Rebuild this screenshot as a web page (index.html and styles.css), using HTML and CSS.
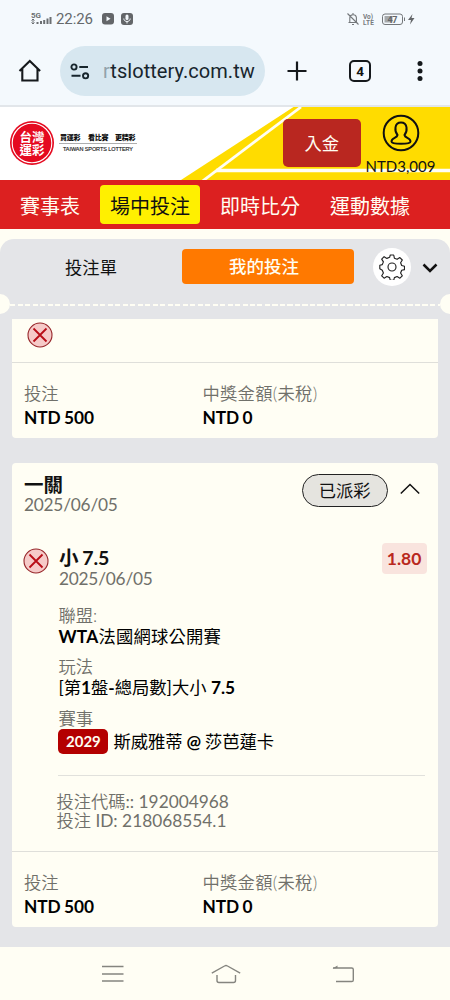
FILE: index.html
```html
<!DOCTYPE html>
<html lang="zh-Hant">
<head>
<meta charset="utf-8">
<title>台灣運彩</title>
<link rel="stylesheet" href="styles.css">
</head>
<body>
<div class="screen">
  <div class="status">
    <svg class="signal" width="21" height="15" viewBox="0 0 21 15"><text x="0" y="7" class="g5" textLength="10">5G</text><path d="M2 8v5M.5 9.500L2 8l1.500 1.500M.5 11.500L2 13l1.500-1.500" class="thin"/><path d="M6.500 13v-2M10 13v-3M13.200 13V9M16.500 13V7.500M19.500 13V6" class="bars"/></svg>
    <span class="clock">22:26</span>
    <svg class="play" width="12" height="12" viewBox="0 0 12 12"><rect width="12" height="11.500" rx="3" fill="#636669"/><path d="M4.500 3.300v5L8.500 5.800z" fill="#f4f9fd"/></svg>
    <svg class="mic" width="12" height="12" viewBox="0 0 12 12"><rect width="12" height="12" rx="3" fill="#636669"/><rect x="4.500" y="1.500" width="3" height="5.500" rx="1.500" fill="#f4f9fd"/><path d="M2.800 5.500c0 4 6.400 4 6.400 0M6 8.500v2" fill="none" stroke="#f4f9fd"/></svg>
    <span class="grow"></span>
    <svg width="70" height="16" viewBox="0 0 70 16"><g fill="none" stroke="#73777a"><path d="M2.500 11.500h9M3.800 11.500V7c0-4 6-4.500 6.600-.5v5M7 3.500V2M6 13.500h2M1.500 2.500l11 11" stroke-width="1.100"/><rect x="36.500" y="3" width="20" height="10.500" rx="2.500"/><path d="M58.500 6.500v3.500"/></g><rect x="38.500" y="5" width="8" height="6.500" fill="#a5a9ac"/><text x="17" y="7.500" class="volte" textLength="10">Vo)</text><text x="17" y="14" class="volte" textLength="11">LTE</text><text x="41.500" y="11.500" class="batt" textLength="10">47</text><path d="M66.500 3L62 9h3l-1 4.500L68.500 7h-3z" fill="#636669"/></svg>
  </div>

  <div class="toolbar">
    <svg class="home" width="24" height="24" viewBox="0 0 24 24"><path d="M1.500 12L11.800 2l10.300 10M4.300 10v11.500h15.200V10" fill="none" stroke="#15191c" stroke-width="2.100"/></svg>
    <div class="url">
      <svg width="20" height="17" viewBox="0 0 20 17"><g fill="none" stroke="#17252d" stroke-width="1.900"><circle cx="4" cy="4" r="2.600"/><circle cx="15.600" cy="12.800" r="2.600"/><path d="M9.300 4H18M1.500 12.800h9"/></g></svg>
      <span class="host"><span class="fade">r</span>tslottery.com.tw</span>
    </div>
    <svg class="plus" width="20" height="20" viewBox="0 0 20 20"><path d="M10 .5v19M.5 10h19" stroke="#15191c" stroke-width="2.200"/></svg>
    <span class="tabs">4</span>
    <svg class="dots" width="8" height="20" viewBox="0 0 8 20"><circle cx="4" cy="2.500" r="2.500"/><circle cx="4" cy="10" r="2.500"/><circle cx="4" cy="17.500" r="2.500"/></svg>
  </div>

  <header class="brand">
    <svg class="stripes" width="450" height="73" viewBox="0 0 450 73"><path d="M181 73L293.500 0H450v73z" fill="#ffdc00"/><path d="M202 74.500L301 0" fill="none" stroke="#fffef4" stroke-width="2.800"/><path d="M216 63.500H450" stroke="#fffef4" stroke-width="3.600"/></svg>
    <svg class="logo" width="130" height="46" viewBox="0 0 130 46"><circle cx="22" cy="22" r="22" fill="#e50a20"/><circle cx="22" cy="22" r="19.800" fill="none" stroke="#fff" stroke-width="1.100"/><text x="9.500" y="20.500" class="seal" textLength="25">台灣</text><text x="9.500" y="34" class="seal" textLength="25">運彩</text><text x="50" y="18.500" class="slogan" textLength="20.500">買運彩</text><text x="78" y="18.500" class="slogan" textLength="20.500">看比賽</text><text x="105" y="18.500" class="slogan" textLength="20.500">更精彩</text><path d="M49 22.500h78" stroke="#999" stroke-width=".8"/><text x="53" y="29.500" class="eng" textLength="70">TAIWAN SPORTS LOTTERY</text></svg>
    <div class="deposit">入金</div>
    <div class="account">
      <svg width="38" height="38" viewBox="0 0 38 38"><g fill="none" stroke="#111" stroke-width="2"><circle cx="19" cy="19" r="17.300"/><path d="M15.500 21C12.500 17.500 12 8.500 19 8.500s6.500 9 3.500 12.500c.5 3.200 6 2.500 6 6.500 0 3-19 3-19 0 0-4 5.500-3.300 6-6.500z"/></g></svg>
      <span>NTD3,009</span>
    </div>
  </header>

  <nav class="menu"><span>賽事表</span><span class="on">場中投注</span><span>即時比分</span><span>運動數據</span></nav>

  <main class="panel">
    <div class="switch">
      <span class="slip">投注單</span>
      <span class="mine">我的投注</span>
      <span class="gear"><svg width="26" height="26" viewBox="0 0 26 26"><g fill="none" stroke="#222" stroke-width="1.150" stroke-linejoin="round"><circle cx="13" cy="13" r="4"/><path d="M11.300 1h3.400l.7 3.200 2.700 1.100 2.800-1.700 2.400 2.400-1.700 2.800 1.100 2.700 2.800.7v3.400l-2.800.7-1.100 2.700 1.700 2.800-2.400 2.400-2.800-1.700-2.700 1.100-.7 2.800h-3.400l-.7-2.800-2.700-1.100-2.800 1.700-2.400-2.400 1.700-2.800-1.100-2.700L.8 14.700v-3.400l2.500-.7 1.100-2.700-1.700-2.800 2.400-2.400 2.800 1.700 2.700-1.100z"/></g></svg></span>
      <svg class="down" width="16" height="10" viewBox="0 0 16 10"><path d="M1.500 1.500L8 8l6.500-6.500" fill="none" stroke="#111" stroke-width="2.500"/></svg>
    </div>
    <div class="tear"><i></i><b></b><i></i></div>

    <section class="card first">
      <div class="rest"><svg class="lost" width="26" height="26" viewBox="0 0 26 26"><circle cx="13" cy="13" r="12" fill="#f6cac8" stroke="#97272b" stroke-width="1.100"/><path d="M6.500 6.500l13 13M19.500 6.500l-13 13" stroke="#b80d16" stroke-width="1.800"/></svg></div>
      <div class="totals"><div><p class="label">投注</p><p class="value">NTD 500</p></div><div><p class="label wide">中獎金額(未稅)</p><p class="value">NTD 0</p></div></div>
    </section>

    <section class="card">
      <div class="detail">
        <div class="head">
          <div class="title"><h2>一關</h2><p class="date">2025/06/05</p></div>
          <span class="paid">已派彩</span>
          <svg class="up" width="20" height="12" viewBox="0 0 20 12"><path d="M.8 10.500L10 1.500l9.200 9" fill="none" stroke="#111" stroke-width="1.500"/></svg>
        </div>
        <div class="bet">
          <svg class="lost" width="26" height="26" viewBox="0 0 26 26"><circle cx="13" cy="13" r="12" fill="#f6cac8" stroke="#97272b" stroke-width="1.100"/><path d="M6.500 6.500l13 13M19.500 6.500l-13 13" stroke="#b80d16" stroke-width="1.800"/></svg>
          <div class="pick"><h3>小 7.5</h3><p class="date">2025/06/05</p></div>
          <span class="odds">1.80</span>
        </div>
        <dl class="facts">
          <dt>聯盟:</dt><dd class="league"><b>WTA</b>法國網球公開賽</dd>
          <dt>玩法</dt><dd>[第<b>1</b>盤<b>-</b>總局數]大小 <b>7.5</b></dd>
          <dt>賽事</dt><dd class="match"><span class="no">2029</span>斯威雅蒂 <b class="at">@</b> 莎芭蓮卡</dd>
        </dl>
        <div class="codes"><p>投注代碼<span>:: 192004968</span></p><p>投注<span> ID: 218068554.1</span></p></div>
      </div>
      <div class="totals"><div><p class="label">投注</p><p class="value">NTD 500</p></div><div><p class="label wide">中獎金額(未稅)</p><p class="value">NTD 0</p></div></div>
    </section>
  </main>

  <div class="system">
    <svg width="22" height="18" viewBox="0 0 22 18"><path d="M0 1.500h21.500M0 9h21.500M0 16h21.500"/></svg>
    <svg width="30" height="20" viewBox="0 0 30 20"><path d="M.8 9.200L13.500 2q1.500-1 3 0l12.700 7.200M6 11v5.500q0 2 2 2h14.500q2 0 2-2V11"/></svg>
    <svg width="23" height="18" viewBox="0 0 23 18"><path d="M1 3h18.700q1.600 0 1.600 1.600v10.300q0 1.600-1.600 1.600H4"/><path d="M.5 3.500L5.500.5v2.500z" fill="#85857f" stroke="none"/></svg>
  </div>
</div>
</body>
</html>
```

FILE: styles.css
```css
* { box-sizing: border-box; margin: 0; padding: 0; }
body { font-family: Lato, "Noto Sans CJK TC", sans-serif; font-size: 17.3px; color: #111; background: #fffef4; }
svg { display: block; flex: none; }
.screen { width: 450px; height: 1000px; overflow: hidden; display: flex; flex-direction: column; background: #fffef4; }
.status { height: 37px; background: #f4f9fd; display: flex; align-items: center; padding: 0 34px 0 31px; }
.signal { margin-right: 4px; }
.g5 { font: bold 8px Roboto, sans-serif; fill: #6b6f72; }
.thin { fill: none; stroke: #6b6f72; stroke-width: 1; }
.bars { stroke: #6b6f72; stroke-width: 2; }
.clock { font: 15px/20px Roboto, sans-serif; color: #65696c; width: 37px; letter-spacing: -.1px; }
.play { margin-left: 9px; }
.mic { margin-left: 7px; }
.grow { flex: 1; }
.volte { font: bold 6.500px Roboto, sans-serif; fill: #777b7e; }
.batt { font: bold 9px Roboto, sans-serif; fill: #636669; }
.toolbar { height: 70px; background: #f4f9fd; border-bottom: 2px solid #e2e6ea; display: flex; align-items: center; padding: 0 0 0 18px; }
.url { width: 205px; height: 50px; margin-left: 18px; border-radius: 25px; background: #d7e7f0; display: flex; align-items: center; padding-left: 10px; }
.host { margin-left: 13px; font: 20px Roboto, sans-serif; color: #17252d; letter-spacing: .05px; white-space: nowrap; }
.fade { color: #92a2ab; }
.plus { margin-left: 22px; }
.tabs { width: 22px; height: 22px; margin-left: 42px; border: 2.500px solid #15191c; border-radius: 5px; font: bold 13.500px/18px Roboto, sans-serif; text-align: center; }
.dots { margin-left: 45px; fill: #15191c; }
.brand { position: relative; height: 73px; background: #fff; display: flex; padding-left: 10px; flex: none; }
.stripes { position: absolute; left: 0; top: 0; }
.logo { position: relative; margin-top: 14px; }
.seal { font: bold 12.500px "Noto Sans CJK TC", sans-serif; fill: #fff; }
.slogan { font: 900 7px "Noto Sans CJK TC", sans-serif; fill: #111; }
.eng { font: 5.500px "Liberation Sans", sans-serif; fill: #222; stroke: #222; stroke-width: .15; }
.deposit { position: relative; margin: 12px 0 0 143px; width: 77.500px; height: 48px; border-radius: 5px; background: #b92720; color: #fffdf2; line-height: 49px; text-align: center; }
.account { position: relative; width: 80px; margin-top: 7px; display: flex; flex-direction: column; align-items: center; }
.account span { font-size: 15px; line-height: 20px; margin-top: 4px; }
.menu { height: 49px; flex: none; background: #dc2020; color: #fffdf2; font-size: 20px; display: flex; align-items: center; padding: 0 0 0 10px; gap: 10px; }
.menu span { height: 39px; line-height: 42px; padding: 0 10px; border-radius: 4px; }
.menu .on { background: #fff000; color: #111; }
.panel { height: 708px; margin-top: 10px; flex: none; border-radius: 14px 14px 0 0; background: #e4e5e8; overflow: hidden; display: flex; flex-direction: column; }
.switch { height: 56px; display: flex; align-items: center; }
.slip { width: 182px; text-align: center; margin-top: -2px; }
.mine { width: 172px; height: 35px; border-radius: 4px; background: #ff7900; color: #fffdf2; font-weight: 500; line-height: 36px; text-align: center; font-size: 17.500px; padding-right: 8px; margin-top: -1px; }
.gear { width: 38px; height: 38px; margin-left: 19px; border-radius: 50%; background: #fff; display: grid; place-items: center; }
.down { margin: 2px 0 0 11px; }
.tear { height: 20px; display: flex; align-items: center; margin: -1px -10px 1px; }
.tear i { width: 20px; height: 20px; border-radius: 50%; background: #fffef4; }
.tear b { flex: 1; height: 2.500px; margin-top: 2px; background: repeating-linear-gradient(90deg, #fffef4 0 5px, transparent 5px 7.500px); }
.card { margin: 25px 12.400px 0; background: #fffef4; border-radius: 4px; flex: none; }
.first { margin-top: 4px; border-radius: 0 0 4px 4px; }
.rest { height: 43px; padding: 3px 0 0 14.500px; }
.totals { height: 76px; border-top: 1px solid #dfdfda; display: flex; padding: 19px 0 0 11.500px; }
.totals > div { width: 178.500px; }
.label, .date, .facts dt, .codes { color: #70706a; }
.label, .facts dt, .codes { font-weight: 350; }
.label, .value { line-height: 24px; }
.wide { letter-spacing: .3px; }
.value { font-weight: 700; color: #000; word-spacing: -1px; }
.detail { height: 388px; padding: 12px 11px 0 11.500px; }
.head { display: flex; height: 68px; }
.title { flex: 1; margin-top: -1px; }
h2 { font-size: 19.500px; line-height: 21px; height: 21px; }
.date { line-height: 20px; letter-spacing: -.2px; }
.paid { width: 86px; height: 33px; border: 1.500px solid #222; border-radius: 17px; background: #e5e4df; line-height: 31px; text-align: center; margin-top: -1px; }
.up { margin: 8px 7px 0 12px; }
.bet { display: flex; height: 63px; }
.bet .lost { margin: 5px 0 0 -1px; }
.pick { flex: 1; margin-left: 10px; padding-top: 4px; }
h3 { font-size: 19.500px; line-height: 22px; height: 22px; word-spacing: -1px; }
.odds { width: 45px; height: 31px; background: #f9e4de; border-radius: 4px; color: #b92820; font-weight: 700; font-size: 17.500px; line-height: 31px; text-align: center; }
.facts { margin: 0 2px 0 34.500px; height: 170px; border-bottom: 1px solid #e1e1dc; }
.facts dt { line-height: 20px; height: 20px; }
.facts dd { line-height: 21px; height: 21px; margin-bottom: 10.300px; color: #000; white-space: nowrap; }
.facts .league { letter-spacing: .22px; }
.facts .match { height: 26px; display: block; line-height: 26px; word-spacing: -.5px; }
.no { display: inline-block; width: 50px; height: 25px; line-height: 25px; margin-right: 5px; border-radius: 5px; background: #b40000; color: #fffdf2; font-size: 15px; font-weight: 700; text-align: center; vertical-align: top; }
.codes { margin: 16px 0 0 32.500px; line-height: 19px; }
.codes span { font-weight: 400; }
.codes p { height: 19px; white-space: pre; }
.system { height: 53px; display: flex; align-items: center; padding-left: 102px; fill: none; stroke: #85857f; stroke-width: 1.400; }
.system svg:nth-child(2) { margin-left: 87px; }
.system svg:nth-child(3) { margin-left: 91px; }
```
